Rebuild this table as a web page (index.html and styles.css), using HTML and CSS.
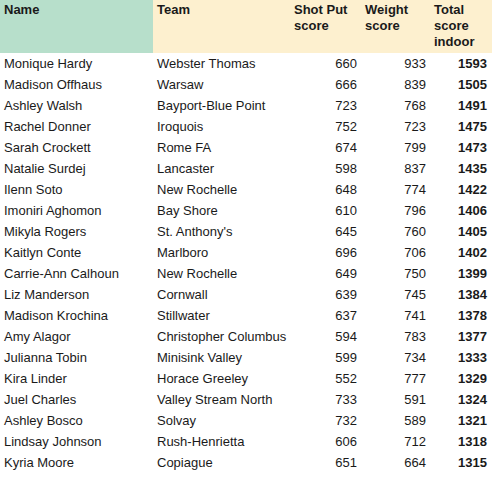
FILE: index.html
```html
<!DOCTYPE html>
<html>
<head>
<meta charset="utf-8">
<link rel="stylesheet" href="styles.css">
</head>
<body>
<table class="scores">
<colgroup>
<col class="c-name"><col class="c-team"><col class="c-shot"><col class="c-weight"><col class="c-total">
</colgroup>
<thead>
<tr>
<th class="h-name">Name</th>
<th class="h-beige">Team</th>
<th class="h-beige">Shot Put score</th>
<th class="h-beige">Weight score</th>
<th class="h-beige">Total score indoor</th>
</tr>
</thead>
<tbody>
<tr><td>Monique Hardy</td><td>Webster Thomas</td><td class="num">660</td><td class="num">933</td><td class="num tot">1593</td></tr>
<tr><td>Madison Offhaus</td><td>Warsaw</td><td class="num">666</td><td class="num">839</td><td class="num tot">1505</td></tr>
<tr><td>Ashley Walsh</td><td>Bayport-Blue Point</td><td class="num">723</td><td class="num">768</td><td class="num tot">1491</td></tr>
<tr><td>Rachel Donner</td><td>Iroquois</td><td class="num">752</td><td class="num">723</td><td class="num tot">1475</td></tr>
<tr><td>Sarah Crockett</td><td>Rome FA</td><td class="num">674</td><td class="num">799</td><td class="num tot">1473</td></tr>
<tr><td>Natalie Surdej</td><td>Lancaster</td><td class="num">598</td><td class="num">837</td><td class="num tot">1435</td></tr>
<tr><td>Ilenn Soto</td><td>New Rochelle</td><td class="num">648</td><td class="num">774</td><td class="num tot">1422</td></tr>
<tr><td>Imoniri Aghomon</td><td>Bay Shore</td><td class="num">610</td><td class="num">796</td><td class="num tot">1406</td></tr>
<tr><td>Mikyla Rogers</td><td>St. Anthony's</td><td class="num">645</td><td class="num">760</td><td class="num tot">1405</td></tr>
<tr><td>Kaitlyn Conte</td><td>Marlboro</td><td class="num">696</td><td class="num">706</td><td class="num tot">1402</td></tr>
<tr><td>Carrie-Ann Calhoun</td><td>New Rochelle</td><td class="num">649</td><td class="num">750</td><td class="num tot">1399</td></tr>
<tr><td>Liz Manderson</td><td>Cornwall</td><td class="num">639</td><td class="num">745</td><td class="num tot">1384</td></tr>
<tr><td>Madison Krochina</td><td>Stillwater</td><td class="num">637</td><td class="num">741</td><td class="num tot">1378</td></tr>
<tr><td>Amy Alagor</td><td>Christopher Columbus</td><td class="num">594</td><td class="num">783</td><td class="num tot">1377</td></tr>
<tr><td>Julianna Tobin</td><td>Minisink Valley</td><td class="num">599</td><td class="num">734</td><td class="num tot">1333</td></tr>
<tr><td>Kira Linder</td><td>Horace Greeley</td><td class="num">552</td><td class="num">777</td><td class="num tot">1329</td></tr>
<tr><td>Juel Charles</td><td>Valley Stream North</td><td class="num">733</td><td class="num">591</td><td class="num tot">1324</td></tr>
<tr><td>Ashley Bosco</td><td>Solvay</td><td class="num">732</td><td class="num">589</td><td class="num tot">1321</td></tr>
<tr><td>Lindsay Johnson</td><td>Rush-Henrietta</td><td class="num">606</td><td class="num">712</td><td class="num tot">1318</td></tr>
<tr><td>Kyria Moore</td><td>Copiague</td><td class="num">651</td><td class="num">664</td><td class="num tot">1315</td></tr>
</tbody>
</table>
</body>
</html>
```
FILE: styles.css
```css
html, body {
  margin: 0;
  padding: 0;
  background: #ffffff;
}
.scores {
  border-collapse: collapse;
  table-layout: fixed;
  width: 492px;
  font-family: "Liberation Sans", Arial, sans-serif;
  font-size: 13px;
  color: #1a1a1a;
}
.c-name { width: 153px; }
.c-team { width: 137px; }
.c-shot { width: 71px; }
.c-weight { width: 69px; }
.c-total { width: 62px; }
.scores th {
  text-align: left;
  vertical-align: top;
  font-weight: bold;
  line-height: 16px;
  height: 53px;
  box-sizing: border-box;
  padding: 2px 4px 2px 4px;
}
.h-name { background: #b7dfcb; }
.h-beige { background: #fdf0cf; }
.scores td {
  height: 21px;
  padding: 0 4px;
  line-height: 21px;
  white-space: nowrap;
  overflow: hidden;
  box-sizing: border-box;
}
.scores td.num { text-align: right; }
.scores td.tot { font-weight: bold; padding-right: 5px; }
```
